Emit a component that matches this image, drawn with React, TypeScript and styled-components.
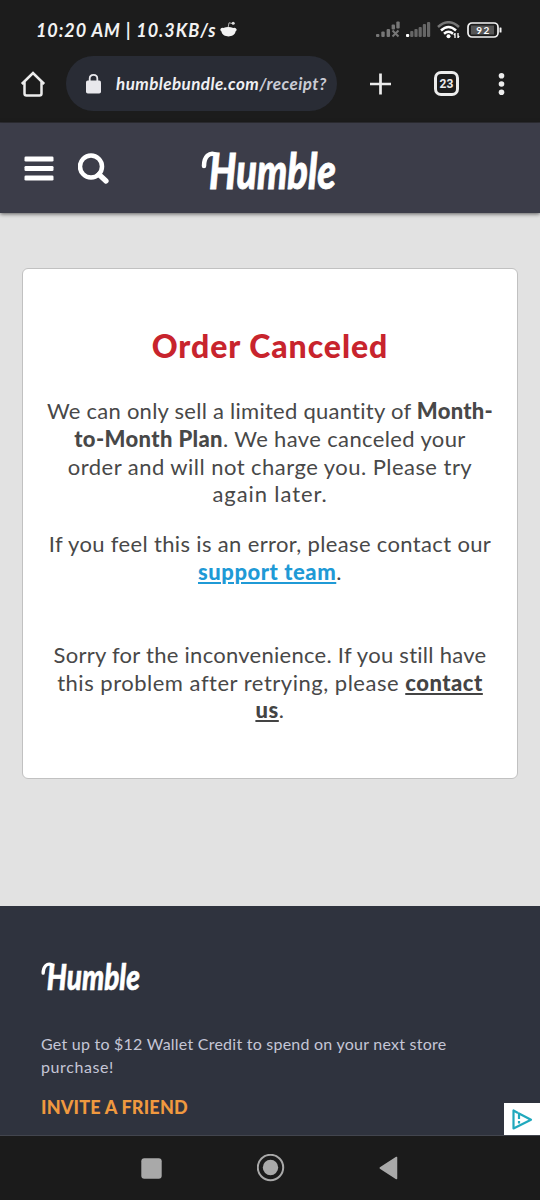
import React from 'react';
import styled, { createGlobalStyle } from 'styled-components';

const GlobalStyle = createGlobalStyle`
  * { box-sizing: border-box; }
  body { margin: 0; background: #1c1c1c; font-family: Lato, "Open Sans", sans-serif; }
  svg { display: block; flex: none; }
`;

const Screen = styled.div`
  width: 540px;
  height: 1200px;
  display: flex;
  flex-direction: column;
  overflow: hidden;
`;

const StatusBar = styled.div`
  height: 56px;
  padding: 3px 38px 0 36px;
  display: flex;
  align-items: center;
  background: #1c1c1c;
  color: #f2f2f2;
`;

const StatusText = styled.span`
  margin-right: 4px;
  font-size: 18px;
  font-weight: 700;
  font-style: italic;
  line-height: 22px;
  letter-spacing: 0.93px;
  white-space: pre;
`;

const StatusIcons = styled.div`
  margin-left: auto;
  display: flex;
  align-items: center;
  gap: 6px;
`;

const BrowserBar = styled.div`
  height: 67px;
  padding: 0 32px 11px 20px;
  display: flex;
  align-items: center;
  background: #1c1c1c;
  border-bottom: 1px solid #303036;
`;

const AddressPill = styled.div`
  width: 271px;
  height: 55px;
  margin-left: 20px;
  padding: 0 0 0 20px;
  display: flex;
  align-items: center;
  gap: 15px;
  border-radius: 28px;
  background: #292c35;
`;

const Address = styled.span`
  font-size: 17px;
  font-weight: 700;
  font-style: italic;
  letter-spacing: 0.43px;
  color: #f0f0f3;
  white-space: nowrap;
`;

const AddressPath = styled.span`
  color: #c9cbd4;
`;

const BarActions = styled.div`
  margin-left: 32px;
  flex: 1;
  display: flex;
  align-items: center;
  justify-content: space-between;
`;

const TabCount = styled.div`
  width: 25px;
  height: 25px;
  margin-left: 6px;
  display: flex;
  align-items: center;
  justify-content: center;
  border: 3px solid #ececec;
  border-radius: 7px;
  color: #ececec;
  font: 700 12px/12px Roboto, sans-serif;
`;

const SiteHeader = styled.header`
  position: relative;
  height: 90px;
  padding: 0 0 0 24px;
  display: flex;
  align-items: center;
  background: #3c3d49;
  box-shadow: 0 1px 4px rgba(0, 0, 0, 0.6);
`;

const HeaderIcons = styled.div`
  display: flex;
  align-items: center;
  gap: 24px;
  width: 173px;
`;

const Page = styled.main`
  height: 693px;
  padding: 55px 22px 0;
  background: #e2e2e2;
`;

const Card = styled.section`
  height: 511px;
  padding-top: 57px;
  border: 1px solid #c1c1c1;
  border-radius: 6px;
  background: #fff;
  color: #484848;
  text-align: center;
`;

const Title = styled.h1`
  margin: 0 0 31px;
  font-size: 32px;
  line-height: 40px;
  font-weight: 900;
  letter-spacing: 0.95px;
  color: #c8242d;
`;

const Paragraph = styled.p<{ $gap: number }>`
  margin: 0 0 ${(p) => p.$gap}px;
  font-size: 22px;
  line-height: 27.8px;
`;

const Line = styled.span<{ $spacing: number }>`
  display: block;
  white-space: nowrap;
  letter-spacing: ${(p) => p.$spacing}px;
`;

const Strong = styled.strong`
  font-weight: 900;
`;

const TextLink = styled.a<{ $color: string }>`
  font-weight: 900;
  color: ${(p) => p.$color};
  text-decoration: underline;
  text-decoration-thickness: 2px;
  text-underline-offset: 2px;
`;

const Footer = styled.footer`
  position: relative;
  height: 230px;
  padding: 43px 38px 0;
  background: #2f333e;
  border-bottom: 1px solid #42454e;
`;

const FooterText = styled.p`
  margin: 32px 3px 17px;
  font-size: 16px;
  line-height: 23px;
  color: #c5c6d6;
`;

const Invite = styled.a`
  display: block;
  margin-left: 3px;
  font-size: 18px;
  line-height: 24px;
  font-weight: 900;
  letter-spacing: 0.2px;
  color: #f0993f;
`;

const AdBadge = styled.div`
  position: absolute;
  right: 0;
  bottom: 0;
  width: 36px;
  height: 32px;
  padding: 5px 0 0 7px;
  background: #fff;
`;

const NavBar = styled.nav`
  height: 64px;
  padding: 0 142px 0 141px;
  display: flex;
  align-items: center;
  justify-content: space-between;
  background: #1b1b1b;
`;

const Wordmark = ({ width }: { width: number }) => (
  <svg width={width} height={(width * 70) / 150} viewBox="0 0 150 70">
    <text
      x="12"
      y="56"
      fill="#fff"
      stroke="#fff"
      strokeWidth="0.8"
      fontFamily="Lato, sans-serif"
      fontStyle="italic"
      fontWeight="900"
      fontSize="50"
      textLength="127"
      lengthAdjust="spacingAndGlyphs"
    >
      Humble
    </text>
    <path d="M7 33C7 24 12 18 20 22" fill="none" stroke="#fff" strokeWidth="4.5" strokeLinecap="round" />
  </svg>
);

const signalBars = [3, 6, 8, 10, 13, 15];

export default function App() {
  return (
    <Screen>
      <GlobalStyle />
      <StatusBar>
        <StatusText>10:20 AM | 10.3KB/s</StatusText>
        <svg width="17" height="17" viewBox="0 0 17 17">
          <path d="M0.3 8.2Q1.2 6 3.2 6.9Q8.5 5 13.3 6.900Q15.700 6 16.700 8.500Q16.500 10 15.500 10.500C14.500 17 2.500 17 1.500 10.500Q0.400 10 0.300 8.200Z" fill="#f2f2f2" />
          <path d="M8.200 6L9 1.800L12.500 2.500" fill="none" stroke="#b0b0b0" strokeWidth="1" />
          <circle cx="13.200" cy="2.300" r="1.500" fill="#ddd" />
        </svg>
        <StatusIcons>
          <svg width="24" height="17" viewBox="0 0 24 17">
            {[3, 5.5, 8].map((h, i) => (
              <rect key={h} x={i * 5.3} y={16 - h} width="3.4" height={h} rx="1" fill="#777" />
            ))}
            <rect x="15.600" y="3.500" width="3.400" height="5" rx="1" fill="#777" />
            <rect x="20.300" y="0.500" width="3.400" height="7" rx="1" fill="#777" />
            <path d="M16.500 9.500L22.500 15.500M22.500 9.500L16.500 15.500" stroke="#777" strokeWidth="2" />
          </svg>
          <svg width="25" height="17" viewBox="0 0 25 17">
            {signalBars.map((h, i) => (
              <rect key={h} x={i * 4.2} y={16 - h} width="3.2" height={h} rx="1" fill={i ? '#666' : '#fff'} />
            ))}
          </svg>
          <svg width="24" height="18" viewBox="0 0 24 18" fill="none" strokeWidth="2.5">
            <path d="M1 6Q11.500 -3.500 22 6" stroke="#777" />
            <path d="M4 9.500Q11.500 2.500 19 9.500" stroke="#fff" />
            <path d="M7 12.800Q11.500 8.800 16 12.800" stroke="#fff" />
            <circle cx="11.500" cy="15.200" r="2" fill="#fff" />
            <path d="M18 12V17M21 12V17M16.800 14.200L18 12.500M22.200 15L21 16.500" stroke="#fff" strokeWidth="1.300" />
          </svg>
          <svg width="35" height="16" viewBox="0 0 35 16">
            <rect x="1" y="1" width="30" height="14" rx="4" fill="none" stroke="#f2f2f2" strokeWidth="1.700" />
            <rect x="4" y="3.500" width="23" height="9" fill="#555" />
            <rect x="32.500" y="5.500" width="2" height="5" rx="0.500" fill="#f2f2f2" />
            <text x="16.500" y="11.500" textAnchor="middle" fontSize="10" fontWeight="700" letterSpacing="1.500" fill="#fff" fontFamily="Lato, sans-serif">92</text>
          </svg>
        </StatusIcons>
      </StatusBar>

      <BrowserBar>
        <svg width="26" height="26" viewBox="0 0 26 26">
          <path d="M1.800 13L13 2L24.200 13M4.500 11V22.500Q4.500 24.500 6.500 24.500H19.500Q21.500 24.500 21.500 22.500V11" fill="none" stroke="#ececec" strokeWidth="2.500" />
        </svg>
        <AddressPill>
          <svg width="15" height="20" viewBox="0 0 15 20">
            <rect x="0" y="6.500" width="15" height="13" rx="1.800" fill="#e8e8ec" />
            <path d="M3.700 7V4.500C3.700 -0.300 11.300 -0.300 11.300 4.500V7" fill="none" stroke="#e8e8ec" strokeWidth="1.800" />
          </svg>
          <Address>
            humblebundle.com<AddressPath>/receipt?</AddressPath>
          </Address>
        </AddressPill>
        <BarActions>
          <svg width="22" height="22" viewBox="0 0 22 22">
            <path d="M11.500 0.500V21.500M1 11H22" stroke="#ececec" strokeWidth="2.700" />
          </svg>
          <TabCount>23</TabCount>
          <svg width="12" height="22" viewBox="0 0 12 22" fill="#ececec">
            <circle cx="5.500" cy="2.800" r="2.800" />
            <circle cx="5.500" cy="11" r="2.800" />
            <circle cx="5.500" cy="19.200" r="2.800" />
          </svg>
        </BarActions>
      </BrowserBar>

      <SiteHeader>
        <HeaderIcons>
          <svg width="30" height="26" viewBox="0 0 30 26" fill="#fff">
            <rect x="0.500" y="1.500" width="29" height="5" rx="1.300" />
            <rect x="0.500" y="11" width="29" height="5" rx="1.300" />
            <rect x="0.500" y="20.500" width="29" height="5" rx="1.300" />
          </svg>
          <svg width="32" height="32" viewBox="0 0 32 32" fill="none" stroke="#fff">
            <circle cx="13" cy="14.500" r="11" strokeWidth="4.500" />
            <path d="M21 22.500L28 29" strokeWidth="5.200" strokeLinecap="round" />
          </svg>
        </HeaderIcons>
        <Wordmark width={150} />
      </SiteHeader>

      <Page>
        <Card>
          <Title>Order Canceled</Title>
          <Paragraph $gap={22}>
            <Line $spacing={0.26}>
              We can only sell a limited quantity of <Strong>Month-</Strong>
            </Line>
            <Line $spacing={0.37}>
              <Strong>to-Month Plan</Strong>. We have canceled your
            </Line>
            <Line $spacing={0.46}>order and will not charge you. Please try</Line>
            <Line $spacing={0.9}>again later.</Line>
          </Paragraph>
          <Paragraph $gap={55}>
            <Line $spacing={0.35}>If you feel this is an error, please contact our</Line>
            <Line $spacing={0.55}>
              <TextLink $color="#1f9ad6">support team</TextLink>.
            </Line>
          </Paragraph>
          <Paragraph $gap={0}>
            <Line $spacing={0.27}>Sorry for the inconvenience. If you still have</Line>
            <Line $spacing={0.51}>
              this problem after retrying, please <TextLink $color="#444">contact</TextLink>
            </Line>
            <Line $spacing={0.6}>
              <TextLink $color="#444">us</TextLink>.
            </Line>
          </Paragraph>
        </Card>
      </Page>

      <Footer>
        <Wordmark width={110} />
        <FooterText>
          <Line $spacing={0.24}>Get up to $12 Wallet Credit to spend on your next store</Line>
          <Line $spacing={0.6}>purchase!</Line>
        </FooterText>
        <Invite>INVITE A FRIEND</Invite>
        <AdBadge>
          <svg width="22" height="23" viewBox="0 0 22 23" fill="none" stroke="#20a9bd" strokeWidth="2.200">
            <path d="M7 5L2.500 2.500V20.500L20 11.800L8 5.500V11" strokeLinejoin="round" />
            <path d="M8 13V15.500" />
          </svg>
        </AdBadge>
      </Footer>

      <NavBar>
        <svg width="21" height="21" viewBox="0 0 21 21">
          <rect x="0.300" y="0.300" width="20.400" height="20.400" rx="3" fill="#a9a9a9" />
        </svg>
        <svg width="28" height="28" viewBox="0 0 28 28">
          <circle cx="13.500" cy="13.500" r="12.700" fill="none" stroke="#a9a9a9" strokeWidth="2" />
          <circle cx="13.500" cy="13.500" r="7.700" fill="#a9a9a9" />
        </svg>
        <svg width="19" height="24" viewBox="0 0 19 24">
          <path d="M1.300 12L17.500 1.500V22.500Z" fill="#a9a9a9" stroke="#a9a9a9" strokeWidth="1.500" strokeLinejoin="round" />
        </svg>
      </NavBar>
    </Screen>
  );
}
